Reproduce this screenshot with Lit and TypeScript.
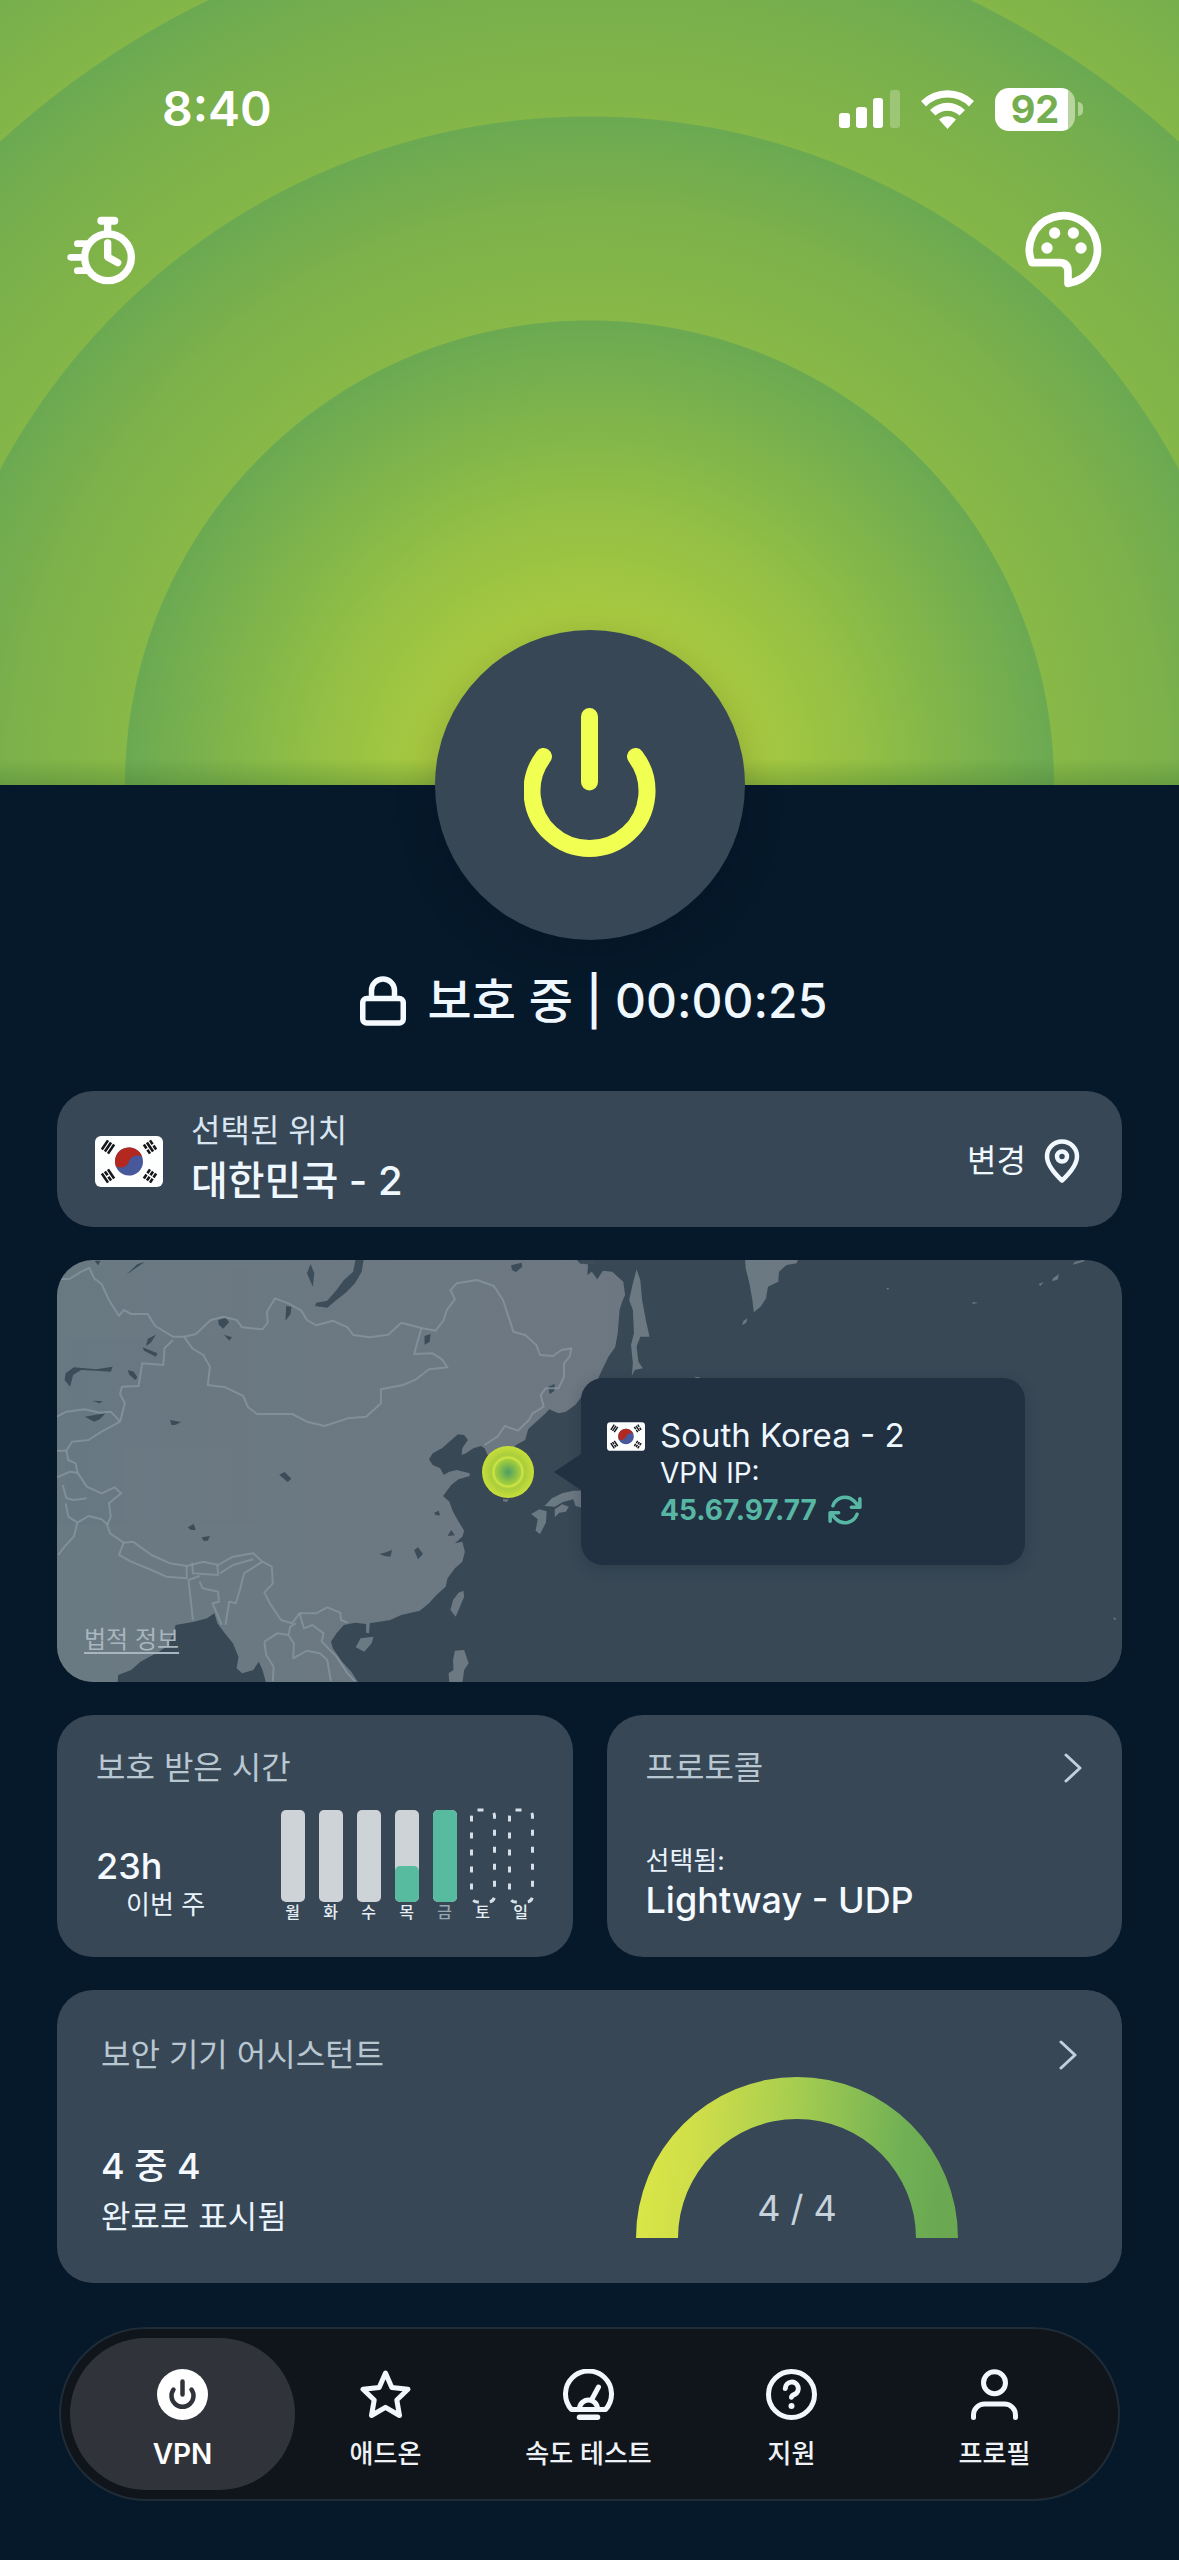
import { LitElement, html, css, svg } from "lit";
import { customElement } from "lit/decorators.js";
import { classMap } from "lit/directives/class-map.js";

interface Day {
  label: string;
  // Share of the day that was protected; null for a day still to come.
  share: number | null;
  today?: boolean;
}

const DAYS: Day[] = [
  { label: "월", share: 0 },
  { label: "화", share: 0 },
  { label: "수", share: 0 },
  { label: "목", share: 39 },
  { label: "금", share: 100, today: true },
  { label: "토", share: null },
  { label: "일", share: null },
];

const bar3 = (y: number, broken: boolean) =>
  broken
    ? svg`<path d="M-5.500 ${y}h4.700M0.800 ${y}h4.700" />`
    : svg`<path d="M-5.500 ${y}h11" />`;

const trigram = (x: number, y: number, turn: number, broken: boolean[]) => svg`
  <g transform="translate(${x} ${y}) rotate(${turn})" stroke="#15171a" stroke-width="2.600">
    ${bar3(-3.7, broken[0])}${bar3(0, broken[1])}${bar3(3.7, broken[2])}
  </g>`;

const flag = (cls: string) => html`
  <svg class=${cls} viewBox="0 0 68 51" role="img" aria-label="대한민국">
    <rect width="68" height="51" rx="6" fill="#fdfefe" />
    <g transform="translate(34 25.5) rotate(-20)">
      <circle r="14" fill="#47599b" />
      <path d="M-14 0A14 14 0 0 1 14 0A9 9 0 0 0 0 0A9 9 0 0 1 -14 0Z" fill="#b3281f" />
    </g>
    ${trigram(13, 11, -56, [false, false, false])}
    ${trigram(55, 11, 56, [true, false, true])}
    ${trigram(13, 40, 56, [false, true, false])}
    ${trigram(55, 40, -56, [true, true, true])}
  </svg>`;

const chevron = html`
  <svg class="chevron" viewBox="0 0 18 30" aria-hidden="true">
    <path d="M2 2L16 15L2 28" fill="none" stroke="#c3d0db" stroke-width="3" stroke-linecap="round" stroke-linejoin="round" />
  </svg>`;

const ICONS = {
  vpn: svg`
    <circle cx="25.5" cy="25.5" r="25.5" fill="#fff" />
    <path d="M25.500 12.500v13M16.500 20.500a11 11 0 1 0 18 0" stroke="#30343a" stroke-width="4.500" />`,
  addon: svg`<path d="M25.500 4L31.800 18.500L48 20.300L36.800 31L39.500 46.500L25.500 38.300L11.500 46.500L14.200 31L3 20.300L19.200 18.500Z" />`,
  speed: svg`
    <path d="M8.500 40.500H42.500A23 23 0 1 0 8.500 40.500Z" />
    <path d="M16.500 40a9 9 0 0 1 18 0M28.500 31L35.500 18" />
    <path d="M16.500 48.200h18" stroke-width="5.500" />`,
  help: svg`
    <circle cx="25.500" cy="25.500" r="23" />
    <path d="M19.300 19.500a6.500 6.500 0 1 1 9.300 5.900q-3 1.300-3.100 2.800" />
    <circle cx="25.500" cy="37" r="3" fill="#f3f6fa" stroke="none" />`,
  profile: svg`
    <circle cx="25.500" cy="13.700" r="11" />
    <path d="M4.500 48.500V46a11 11 0 0 1 11-11h20a11 11 0 0 1 11 11v2.500" />`,
};

const TABS = [
  { icon: ICONS.vpn, label: "VPN", active: true },
  { icon: ICONS.addon, label: "애드온", active: false },
  { icon: ICONS.speed, label: "속도 테스트", active: false },
  { icon: ICONS.help, label: "지원", active: false },
  { icon: ICONS.profile, label: "프로필", active: false },
];

const map = html`
  <svg class="map-art" viewBox="0 0 1066 422" preserveAspectRatio="xMinYMid slice" aria-hidden="true">
    <defs>
      <linearGradient id="land" x1="0" x2="1">
        <stop offset="0" stop-color="#6a7a82" />
        <stop offset="1" stop-color="#6d7782" />
      </linearGradient>
    </defs>
    <g transform="translate(-16.500 -20) scale(0.370 0.33333)">
      <g fill="url(#land)">
        <path d="M30 50H1441L1460 72L1480 68L1478 105L1490 95L1505 118L1520 92L1545 95L1575 125L1580 165L1572 185L1565 210L1560 280L1553 322L1535 350L1520 385L1505 420L1470 460L1445 495L1420 515L1400 520L1375 508L1365 520L1340 545L1318 568L1310 600L1285 615L1268 640L1290 690L1292 740L1268 770L1235 765L1235 700L1215 660L1200 625L1190 618L1170 625L1150 640L1138 645L1140 625L1155 600L1145 585L1128 583L1105 605L1085 625L1060 640L1050 658L1060 675L1080 685L1090 705L1105 695L1125 690L1160 700L1160 708L1130 718L1110 735L1088 768L1105 785L1115 815L1130 845L1145 872L1140 890L1120 910L1140 905L1147 935L1140 965L1120 985L1100 1015L1095 1040L1070 1065L1050 1090L1025 1112L975 1125L945 1140L890 1150L888 1180L880 1178L880 1152L850 1148L820 1155L800 1180L785 1205L790 1225L815 1265L840 1295L860 1330H610L600 1290L590 1265L575 1290L545 1300L530 1285L535 1250L520 1210L495 1175L478 1150L470 1120L450 1135L415 1145L365 1155L360 1180L340 1220L320 1235L270 1265L245 1290L210 1305L208 1330H30Z" />
        <path d="M1611 88L1621 120L1626 180L1636 240L1646 290L1621 290L1611 320L1616 365L1628 385L1606 390L1598 408L1601 370L1596 315L1604 280L1601 210L1591 180L1601 130Z" />
        <path d="M1904 55H2048L2044 70L2016 75L1996 95L1994 125L1966 140L1961 175L1946 200L1928 217L1924 180L1916 130L1906 85Z" />
        <path d="M1911 235L1907 248L1896 256L1900 242ZM2286 143L2294 145L2290 150ZM2518 186L2534 188L2520 192ZM2790 74L2822 64L2818 60L2795 66ZM2735 116L2752 102L2750 118L2735 124ZM2698 132L2712 126L2702 138ZM2900 1132L2908 1136L2902 1140ZM1768 410L1784 412L1774 418Z" />
        <path d="M1475 752L1440 752L1410 760L1382 775L1362 798L1390 800L1412 786L1440 778L1446 798L1475 806Z" />
        <path d="M1390 808L1410 793L1428 800L1420 815L1402 818L1390 832ZM1326 822L1348 808L1368 814L1366 848L1350 882L1338 872L1344 838Z" />
        <path d="M1143 1052L1145 1070L1130 1110L1122 1130L1108 1110L1115 1080L1130 1058ZM865 1195L900 1190L895 1210L875 1235L852 1222ZM1120 1232L1145 1230L1157 1270L1145 1290L1140 1330H1105L1103 1300L1116 1290L1115 1260ZM1250 778H1266L1260 786L1250 784Z" />
      </g>
      <g fill="#3c4c59">
        <path d="M852 55H874L868 95L850 130L825 158L800 180L775 203L742 198L745 188L775 182L800 150L820 120L845 95Z" />
        <path d="M195 380L190 395L150 392L110 390L88 405L80 440L65 420L68 400L90 382L150 388Z" />
        <path d="M120 530L150 524L176 520L160 538L145 545ZM140 482L168 484L160 490ZM236 390L252 395L262 412L256 420L240 404ZM276 322L316 340L312 350L280 332ZM290 296L312 284L298 308L285 318ZM480 240L500 234L510 246L494 266L482 254ZM496 284L518 292L510 302ZM664 198L678 200L676 222L662 242ZM1038 288L1054 282L1052 305L1038 314ZM720 100L730 72L740 100L736 140L728 120ZM232 104L262 72L282 66L258 84ZM146 62L162 62L156 76ZM1272 76L1300 68L1302 80L1285 96L1274 90ZM1372 440L1390 432L1388 454L1376 462ZM645 704L660 696L678 716L668 726ZM398 862L414 852L420 870L406 870ZM436 892L458 888L452 902L440 902ZM350 540L380 546L366 554L354 556ZM916 942L930 938L950 930L946 950L930 948ZM1010 930L1020 922L1034 942L1020 958ZM1064 818L1076 812L1080 826L1068 826ZM1100 888L1110 870L1120 886ZM1455 62L1500 62L1498 76L1470 72Z" />
      </g>
      <g class="borders">
        <path d="M44 118L80 116L110 95L132 84L145 115L165 132L185 180L212 228L225 210L245 222L290 222L310 258L358 290L388 290L420 282L460 240L495 230L530 240L545 262L600 268L614 248L612 215L634 175L670 190L705 212L720 240L745 256L790 242L830 262L845 285L890 292L940 284L975 248L1030 264L1068 272L1090 240L1098 210L1120 178L1108 150L1125 130L1180 120L1225 138L1250 180L1262 220L1278 275L1310 285L1340 315L1350 345L1385 348L1408 330L1435 325L1430 350L1415 370L1415 410L1400 445L1365 445L1352 465L1360 500L1330 520L1320 540L1290 572L1255 558L1235 590L1200 615" />
        <path d="M388 290L410 325L440 345L458 380L452 435L500 442L548 468L560 500L585 522L680 522L720 545L768 558L830 535L880 530L920 490L920 448L980 435L1015 418L1050 388L1100 382L1085 358L1060 340L1010 342L1020 300L1030 264" />
        <path d="M358 300L335 325L332 375L275 370L265 438L220 440L215 462L228 490L215 545L165 575L130 600L85 605L70 632L75 660L95 670L100 698L125 740L165 760L200 742L218 760L185 790L190 830L180 855L188 880L225 908L250 905L300 945L350 970L395 978L440 965L480 975L520 950L575 940L600 965L625 980L628 1030L605 1058L620 1090L650 1140L680 1150L700 1120L745 1120L775 1102L810 1118L812 1140L830 1148" />
        <path d="M44 530L70 515L120 508L160 518L190 515L215 545M44 632L70 632M44 712L80 695L100 698M60 735L70 775L90 780L125 775M68 790L75 830L100 848L130 828L165 838L182 855M100 848L90 890L65 920L48 945" />
        <path d="M225 908L212 945L245 965L300 990L340 1010L395 1015L395 978M410 968L412 1000L480 1005L478 975M430 1008L400 1020L405 1070L412 1140M430 1025L438 1045L480 1055L482 1085L465 1090L490 1155M485 1000L520 975L575 958M600 965L550 1000L540 1045L528 1090L510 1085L500 1155" />
        <path d="M605 1205L640 1180L670 1185L675 1160L690 1150M605 1205L610 1245L630 1280L628 1324M670 1185L685 1210L683 1255L720 1232L755 1240L775 1260L785 1324M700 1120L712 1165L735 1155L765 1180L760 1205L800 1250L830 1300L850 1324" />
      </g>
    </g>
  </svg>`;

@customElement("app-root")
export class AppRoot extends LitElement {
  static styles = css`
    :host {
      display: block;
      background: #06192a;
      color: #eff7ff;
      font-family: Inter, "Noto Sans CJK KR", sans-serif;
      font-size: 32px;
      line-height: 40px;
    }
    * { box-sizing: border-box; }
    svg { display: block; flex: none; }
    button, a { color: inherit; font: inherit; }
    button { padding: 0; border: 0; background: none; cursor: pointer; }
    h2, p { margin: 0; font: inherit; }

    .hero {
      min-height: 785px;
      padding-top: 79px;
      background:
        linear-gradient(to top, rgba(66, 120, 46, 0.35), rgba(66, 120, 46, 0) 26px),
        radial-gradient(circle at 50% 100%,
          #b0c83b 0, #a8c940 165px, #92bf45 280px, #6ba952 464px,
          #88b847 465px, #7cb14b 580px, #6ba952 668px,
          #84b648 669px, #79b04c 790px, #6ba952 872px,
          #84b648 873px, #6ba952 1076px);
    }
    .statusbar {
      display: flex;
      align-items: center;
      justify-content: space-between;
      height: 60px;
      padding: 0 96px 0 162px;
    }
    .clock { font-size: 48px; line-height: 60px; font-weight: 600; color: #fff; }
    .signals { display: flex; align-items: center; gap: 21px; }
    .signal { width: 61px; height: 42px; }
    .wifi { width: 53px; height: 42px; }
    .battery-wrap { display: flex; align-items: center; gap: 3px; }
    .battery {
      display: flex;
      align-items: center;
      justify-content: center;
      width: 80px;
      height: 43px;
      border-radius: 14px;
      background: linear-gradient(90deg, #fff 73px, #b9d6a0 73px);
      color: #74ae50;
      font-size: 38px;
      line-height: 43px;
      font-weight: 700;
    }
    .nub { width: 5px; height: 14px; border-radius: 0 6px 6px 0; background: #b2d295; }
    .toolbar {
      display: flex;
      align-items: center;
      justify-content: space-between;
      padding: 71px 75px 0 65px;
    }
    .timer { width: 73px; height: 79px; }
    .palette { width: 79px; height: 79px; }

    main { display: flex; flex-direction: column; padding: 0 57px 59px; }
    .power {
      display: flex;
      align-items: center;
      justify-content: center;
      align-self: center;
      width: 310px;
      height: 310px;
      margin-top: -155px;
      padding-bottom: 6px;
      border-radius: 50%;
      background: #374756;
      box-shadow: 0 12px 40px rgba(0, 12, 24, 0.2);
    }
    .power svg { width: 132px; height: 152px; }
    .state {
      display: flex;
      align-items: center;
      justify-content: center;
      gap: 22px;
      margin-top: 31px;
      padding-left: 8px;
      font-size: 48px;
      line-height: 60px;
      font-weight: 500;
    }
    .lock { width: 46px; height: 50px; }

    .cards { display: flex; flex-direction: column; gap: 33px; margin-top: 60px; }
    .card { border-radius: 36px; background: #374756; }
    .location {
      display: flex;
      align-items: center;
      gap: 28px;
      min-height: 136px;
      padding: 18px 42px 14px 38px;
    }
    .flag { width: 68px; height: 51px; }
    .place { flex: 1; }
    .soft { color: #d9e6f2; }
    .place-name { font-size: 40px; line-height: 60px; font-weight: 500; }
    .change { display: flex; align-items: center; gap: 18px; }
    .pin { width: 36px; height: 44px; }

    .map { position: relative; min-height: 422px; overflow: hidden; background: #384855; }
    .map-art { position: absolute; inset: 0; width: 100%; height: 100%; }
    .borders path {
      fill: none;
      stroke: #8997a1;
      stroke-width: 2;
      stroke-linejoin: round;
      vector-effect: non-scaling-stroke;
      opacity: 0.75;
    }
    .marker {
      position: absolute;
      left: 425px;
      top: 186px;
      width: 52px;
      height: 52px;
      border-radius: 50%;
      background: radial-gradient(circle, #4e9d68 0, #8cc145 9px, #a6d13e 13px, #d3e646 14px, #a9cd3c 17px, #c8df3a 26px);
    }
    .tip {
      position: absolute;
      left: 524px;
      top: 118px;
      display: flex;
      gap: 15px;
      width: 444px;
      height: 187px;
      padding: 37px 26px;
      border-radius: 22px;
      background: #213142;
      box-shadow: 0 4px 14px rgba(20, 36, 52, 0.25);
    }
    .tip::before {
      content: "";
      position: absolute;
      right: 100%;
      top: 76px;
      border: solid transparent;
      border-width: 18px 27px 18px 0;
      border-right-color: #213142;
    }
    .tip-flag { width: 38px; height: 29px; margin-top: 7px; }
    .tip-name { font-size: 33px; }
    .tip-small { font-size: 28px; line-height: 36px; }
    .ip {
      display: flex;
      align-items: center;
      gap: 11px;
      font-size: 28px;
      line-height: 38px;
      font-weight: 700;
      color: #57b7a4;
    }
    .refresh { width: 34px; height: 34px; }
    .legal {
      position: absolute;
      left: 27px;
      bottom: 24px;
      font-size: 24px;
      line-height: 36px;
      color: #a9b5bf;
      text-underline-offset: 4px;
    }

    .pair { display: grid; grid-template-columns: 1fr 1fr; gap: 34px; }
    .tile {
      display: flex;
      flex-direction: column;
      justify-content: space-between;
      min-height: 242px;
      padding: 33px 40px 35px 39px;
    }
    .head { display: flex; align-items: center; justify-content: space-between; color: #b9c7d2; }
    .chevron { width: 18px; height: 30px; }
    .value { font-size: 36px; line-height: 44px; font-weight: 500; color: #f4faff; }
    .caption { font-size: 26px; line-height: 34px; color: #e9f3fc; }
    .time-row { display: flex; align-items: flex-end; justify-content: space-between; }
    .week-label { padding-left: 30px; }
    .days { display: flex; gap: 14px; }
    .day { display: flex; flex-direction: column; align-items: center; }
    .bar {
      display: flex;
      align-items: flex-end;
      width: 24px;
      height: 92px;
      border-radius: 5px;
      background: #ced3d7;
      overflow: hidden;
    }
    .fill { width: 100%; border-radius: 5px; background: #57bba0; }
    .future { width: 24px; height: 92px; overflow: visible; }
    .day-name { font-size: 16px; line-height: 20px; font-weight: 500; color: #e6eef5; }
    .today { color: #98a8b3; }

    .assistant {
      display: grid;
      grid-template-columns: minmax(0, 535px) 322px 1fr;
      grid-template-rows: auto 1fr;
      min-height: 293px;
      padding: 45px 45px 45px 44px;
    }
    .assistant .head { grid-column: 1 / -1; grid-row: 1; }
    .score { grid-column: 1; grid-row: 2; align-self: end; }
    .score .value { line-height: 60px; }
    .score .caption { font-size: 32px; line-height: 42px; }
    .gauge { position: relative; grid-column: 2; grid-row: 1 / 3; align-self: end; width: 322px; height: 162px; }
    .gauge svg { width: 322px; height: 162px; }
    .gauge-text {
      position: absolute;
      left: 0;
      right: 0;
      bottom: 8px;
      text-align: center;
      font-size: 36px;
      line-height: 44px;
      color: #c6d2dc;
    }

    nav {
      display: grid;
      grid-template-columns: repeat(5, 1fr);
      min-height: 174px;
      margin: 44px 2px 0;
      padding: 9px 22px 9px 20px;
      border: 2px solid #1f2c37;
      border-radius: 87px;
      background: #10151b;
    }
    .tab {
      position: relative;
      display: flex;
      flex-direction: column;
      align-items: center;
      gap: 17px;
      padding-top: 31px;
      color: #eef2f6;
      font-size: 26px;
      line-height: 34px;
      font-weight: 500;
      text-decoration: none;
      white-space: nowrap;
    }
    .active { font-size: 28px; font-weight: 600; color: #fff; }
    .active::before {
      content: "";
      position: absolute;
      inset: 0 -11px;
      border-radius: 76px;
      background: #30343a;
    }
    .tab svg {
      position: relative;
      width: 51px;
      height: 51px;
      fill: none;
      stroke: #f3f6fa;
      stroke-width: 5;
      stroke-linecap: round;
      stroke-linejoin: round;
    }
    .active svg { stroke: none; }
    .tab-label { position: relative; }
  `;

  private renderDay(day: Day) {
    return html`
      <div class="day">
        ${day.share === null
          ? html`<svg class="future" viewBox="0 0 24 92" aria-hidden="true">
              <rect x="0.500" y="0" width="23" height="92" rx="6" fill="none" stroke="#d6dfe7" stroke-width="3" stroke-dasharray="6 11" />
            </svg>`
          : html`<div class="bar"><div class="fill" style="height:${day.share}%"></div></div>`}
        <span class=${classMap({ "day-name": true, today: !!day.today })}>${day.label}</span>
      </div>`;
  }

  render() {
    return html`
      <header class="hero">
        <div class="statusbar">
          <span class="clock">8:40</span>
          <div class="signals">
            <svg class="signal" viewBox="0 0 61 42" aria-hidden="true" fill="#fff">
              <rect x="0" y="25" width="11" height="15" rx="3" />
              <rect x="17" y="19" width="11" height="21" rx="3" />
              <rect x="34" y="10" width="10" height="30" rx="3" />
              <rect x="51" y="2" width="10" height="38" rx="3" opacity="0.250" />
            </svg>
            <svg class="wifi" viewBox="0 0 53 42" aria-hidden="true" fill="#fff">
              <path d="M0 13A38 38 0 0 1 53 13L48 18.500A30 30 0 0 0 5 18.500Z" />
              <path d="M9 22A25 25 0 0 1 44 22L38.500 27.500A17.500 17.500 0 0 0 14.500 27.500Z" />
              <path d="M18 31.500A12.500 12.500 0 0 1 35 31.500L26.500 41Z" />
            </svg>
            <div class="battery-wrap"><span class="battery">92</span><span class="nub"></span></div>
          </div>
        </div>
        <div class="toolbar">
          <button aria-label="타이머">
            <svg class="timer" viewBox="75 446 219 237" fill="none" stroke="#fff" stroke-linecap="round" stroke-linejoin="round">
              <circle cx="204" cy="588" r="70" stroke-width="22" />
              <path d="M184 478H223" stroke-width="24" />
              <path d="M203 480V515" stroke-width="22" stroke-linecap="butt" />
              <path d="M203 545V587L233 604" stroke-width="22" />
              <path d="M112 547H140M92 588H130M112 628H140" stroke-width="20" />
            </svg>
          </button>
          <button aria-label="테마">
            <svg class="palette" viewBox="675 450 237 237" fill="none" stroke="#fff" stroke-width="23" stroke-linejoin="round">
              <path d="M696 608A102 102 0 1 1 804 670V634Q804 608 778 608Z" />
              <g fill="#fff" stroke="none">
                <circle cx="764" cy="519" r="17" /><circle cx="820" cy="519" r="17" />
                <circle cx="741" cy="564" r="17" /><circle cx="843" cy="564" r="17" />
              </g>
            </svg>
          </button>
        </div>
      </header>

      <main>
        <button class="power" aria-label="연결 끊기">
          <svg viewBox="0 0 132 152" fill="none" stroke="#f1fe52" stroke-width="17" stroke-linecap="round">
            <path d="M65.500 10.500V76M19.500 50.500A57.500 57.500 0 1 0 111.500 50.500" />
          </svg>
        </button>
        <div class="state">
          <svg class="lock" viewBox="0 0 46 50" fill="none" stroke="#f4faff" stroke-width="5.500" stroke-linejoin="round" aria-hidden="true">
            <rect x="2.750" y="22.500" width="40.500" height="24.500" rx="4" />
            <path d="M11.500 22V14.500a11.500 11.500 0 0 1 23 0V22" />
          </svg>
          <span>보호 중 | 00:00:25</span>
        </div>

        <div class="cards">
          <section class="card location">
            ${flag("flag")}
            <div class="place">
              <p class="soft">선택된 위치</p>
              <p class="place-name">대한민국 - 2</p>
            </div>
            <button class="change">
              <span>변경</span>
              <svg class="pin" viewBox="0 0 36 44" fill="none" stroke="#f1f8ff" stroke-width="4.500" stroke-linejoin="round" aria-hidden="true">
                <path d="M18 41.500C10 34 3 26 3 17.500A15 15 0 0 1 33 17.500C33 26 26 34 18 41.500Z" />
                <circle cx="18" cy="17.500" r="5" />
              </svg>
            </button>
          </section>

          <section class="card map" aria-label="지도">
            ${map}
            <span class="marker"></span>
            <div class="tip">
              ${flag("tip-flag")}
              <div>
                <p class="tip-name">South Korea - 2</p>
                <p class="tip-small">VPN IP:</p>
                <button class="ip">
                  <span>45.67.97.77</span>
                  <svg class="refresh" viewBox="0 0 24 24" fill="none" stroke="#57b7a4" stroke-width="2.500" stroke-linecap="round" stroke-linejoin="round" aria-hidden="true">
                    <path d="M22.500 4v6h-6M1.500 20v-6h6M3.510 9a9 9 0 0 1 14.850-3.360L22.500 10M1.500 14l4.140 4.360A9 9 0 0 0 20.490 15" />
                  </svg>
                </button>
              </div>
            </div>
            <a class="legal" href="#legal">법적 정보</a>
          </section>

          <div class="pair">
            <section class="card tile">
              <h2 class="head">보호 받은 시간</h2>
              <div class="time-row">
                <div>
                  <p class="value">23h</p>
                  <p class="caption week-label">이번 주</p>
                </div>
                <div class="days">${DAYS.map((d) => this.renderDay(d))}</div>
              </div>
            </section>
            <section class="card tile">
              <div class="head"><h2>프로토콜</h2>${chevron}</div>
              <div>
                <p class="caption">선택됨:</p>
                <p class="value">Lightway - UDP</p>
              </div>
            </section>
          </div>

          <section class="card assistant">
            <div class="head"><h2>보안 기기 어시스턴트</h2>${chevron}</div>
            <div class="score">
              <p class="value">4 중 4</p>
              <p class="caption">완료로 표시됨</p>
            </div>
            <div class="gauge">
              <svg viewBox="0 0 322 162" aria-hidden="true">
                <defs>
                  <linearGradient id="arc" x1="0" x2="1" y1="0" y2="0.050">
                    <stop offset="0" stop-color="#dce946" />
                    <stop offset="0.200" stop-color="#d0de49" />
                    <stop offset="0.500" stop-color="#a6cd50" />
                    <stop offset="0.850" stop-color="#70b055" />
                    <stop offset="1" stop-color="#6aa851" />
                  </linearGradient>
                </defs>
                <path d="M0 162A161 161 0 0 1 322 162H280A119 119 0 0 0 42 162Z" fill="url(#arc)" />
              </svg>
              <span class="gauge-text">4 / 4</span>
            </div>
          </section>
        </div>

        <nav>
          ${TABS.map(
            (t) => html`
              <a class=${classMap({ tab: true, active: t.active })} href="#">
                <svg viewBox="0 0 51 51" aria-hidden="true">${t.icon}</svg>
                <span class="tab-label">${t.label}</span>
              </a>`
          )}
        </nav>
      </main>
    `;
  }
}
